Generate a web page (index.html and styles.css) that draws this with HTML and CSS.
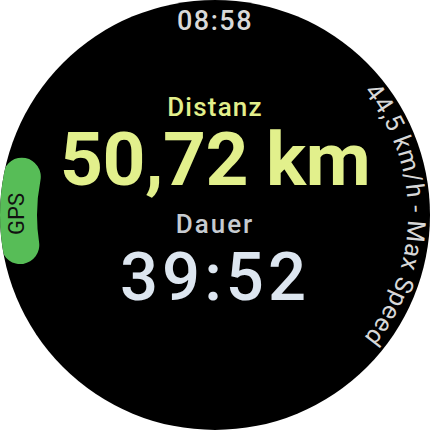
FILE: index.html
```html
<!DOCTYPE html>
<html lang="de">
<head>
<meta charset="utf-8">
<title>Workout</title>
<link rel="stylesheet" href="styles.css">
</head>
<body>
<div class="watch">
  <div class="content">
    <div class="clock">08:58</div>
    <div class="label label-distance">Distanz</div>
    <div class="value value-distance">50,72 km</div>
    <div class="label label-duration">Dauer</div>
    <div class="value value-duration">39:52</div>
  </div>
  <svg class="overlay" viewBox="0 0 430 430" width="430" height="430">
    <defs>
      <path id="edge-right" d="M281,33.6 A193,193 0 0 1 281,396.4"/>
    </defs>
    <path class="gps-pill" d="M21.8,176.7 A197,197 0 0 0 20.3,245.1"/>
    <text class="gps-text" transform="translate(24,214) rotate(-90)" text-anchor="middle">GPS</text>
    <text class="curved">
      <textPath href="#edge-right" startOffset="50%" text-anchor="middle">44,5 km/h - Max Speed</textPath>
    </text>
  </svg>
</div>
</body>
</html>
```

FILE: styles.css
```css
html, body {
  margin: 0;
  padding: 0;
  background: #ffffff;
}

body {
  width: 430px;
  height: 430px;
  font-family: Roboto, "Liberation Sans", sans-serif;
}

.watch {
  position: relative;
  width: 430px;
  height: 430px;
  border-radius: 50%;
  background: #000000;
  overflow: hidden;
}

.content {
  display: flex;
  flex-direction: column;
  align-items: center;
  padding-top: 8px;
}

.clock {
  font-size: 27px;
  line-height: 26px;
  font-weight: 500;
  color: #d9d9d9;
  letter-spacing: 1.5px;
}

.label {
  font-size: 26px;
  line-height: 24px;
  font-weight: 500;
}

.label-distance {
  margin-top: 61px;
  color: #e2ef8b;
  letter-spacing: 1.2px;
}

.label-duration {
  margin-top: 17px;
  color: #c6cbd1;
  letter-spacing: 2px;
}

.value-distance {
  margin-top: 4px;
  font-size: 75px;
  line-height: 72px;
  font-weight: 700;
  color: #e2f08c;
  letter-spacing: -0.5px;
}

.value-duration {
  margin-top: 8px;
  font-size: 67px;
  line-height: 66px;
  font-weight: 500;
  color: #dde6f0;
  letter-spacing: 4px;
}

.overlay {
  position: absolute;
  left: 0;
  top: 0;
}

.gps-pill {
  fill: none;
  stroke: #57bd57;
  stroke-width: 38;
  stroke-linecap: round;
}

.gps-text {
  font-family: Roboto, "Liberation Sans", sans-serif;
  font-size: 22px;
  fill: #111111;
}

.curved {
  font-family: Roboto, "Liberation Sans", sans-serif;
  font-size: 25px;
  letter-spacing: 0.6px;
  fill: #d8d8d8;
}
```
